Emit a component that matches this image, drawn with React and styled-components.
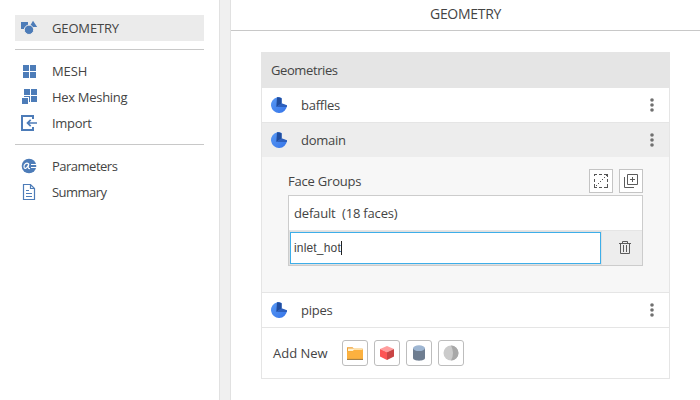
import React from "react";
import styled, { createGlobalStyle } from "styled-components";

const GlobalStyle = createGlobalStyle`
  *, *::before, *::after { box-sizing: border-box; }
  body { margin: 0; background: #fff; overflow: hidden; }
  svg { display: block; flex: none; }
`;

const Page = styled.div`
  display: flex;
  width: 700px;
  height: 400px;
  overflow: hidden;
  font-family: "Open Sans", "Noto Sans", sans-serif;
  font-size: 13px;
  line-height: 20px;
  color: #444;
  background: #fff;
`;

const Sidebar = styled.nav`
  flex: none;
  width: 219px;
  padding: 15px 15px 0;
`;

const NavItem = styled.div`
  display: flex;
  align-items: center;
  height: 26px;
  padding-left: 5px;
  gap: 14px;
  background: ${(p) => (p.$active ? "#ebebeb" : "transparent")};
`;

const NavIcon = styled.span`
  width: 18px;
  height: 18px;
`;

const NavLabel = styled.span`
  letter-spacing: ${(p) => p.$tracking || 0}px;
`;

const NavDivider = styled.div`
  height: 1px;
  margin: 8px 0;
  background: #c8c8c8;
`;

const Splitter = styled.div`
  flex: none;
  width: 12px;
  background: #f0f0f0;
  border: solid #e1e1e1;
  border-width: 0 1px;
`;

const Main = styled.main`
  flex: 1;
`;

const Title = styled.header`
  height: 31px;
  padding-top: 4px;
  font-size: 14px;
  letter-spacing: -0.3px;
  text-align: center;
  border-bottom: 1px solid #c8c8c8;
`;

const Panel = styled.section`
  width: 409px;
  margin: 21px 0 0 30px;
  border: 1px solid #e5e5e5;
  border-top: 0;
`;

const PanelHeader = styled.div`
  height: 36px;
  padding: 8px 0 0 9px;
  letter-spacing: -0.4px;
  background: #e5e5e5;
`;

const GeometryRow = styled.div`
  display: flex;
  align-items: center;
  height: ${(p) => (p.$open ? 34 : 35)}px;
  padding: 0 13px 0 9px;
  background: ${(p) => (p.$open ? "#ededed" : "#fff")};
  border-bottom: ${(p) => (p.$open ? "0" : "1px solid #e5e5e5")};
`;

const GeometryName = styled.span`
  flex: 1;
  margin-left: 14px;
  letter-spacing: -0.25px;
`;

const Details = styled.div`
  height: 136px;
  padding: 12px 26px 0;
  background: #f7f7f7;
  border-bottom: 1px solid #e5e5e5;
`;

const DetailsHeader = styled.div`
  display: flex;
  align-items: center;
  height: 24px;
  gap: 6px;
`;

const DetailsTitle = styled.span`
  flex: 1;
  letter-spacing: -0.2px;
`;

const ToolButton = styled.button`
  display: grid;
  place-items: center;
  width: 24px;
  height: 24px;
  padding: 0;
  background: #fff;
  border: 1px solid #c4c4c4;
`;

const FaceList = styled.div`
  width: 355px;
  margin-top: 2px;
  border: 1px solid #ccc;
`;

const FaceRow = styled.div`
  height: 35px;
  padding: 7px 0 0 5px;
  letter-spacing: -0.17px;
  background: #fff;
  border-bottom: 1px solid #e5e5e5;
  white-space: pre;
`;

const EditRow = styled.div`
  display: flex;
  height: 34px;
  background: #ededed;
`;

const NameField = styled.div`
  display: flex;
  align-items: center;
  width: 313px;
  height: 34px;
  padding-left: 4px;
  font-family: "Liberation Sans", Arial, sans-serif;
  font-size: 12px;
  letter-spacing: 0.17px;
  background: #fff;
  border: 1px solid #e0e0e0;
  box-shadow: inset 0 0 0 1px #3daee9;
`;

const Caret = styled.span`
  width: 1px;
  height: 14px;
  background: #222;
`;

const DeleteCell = styled.div`
  flex: 1;
  display: grid;
  place-items: center;
  padding-left: 6px;
`;

const AddRow = styled.div`
  display: flex;
  align-items: center;
  height: 50px;
  padding-left: 11px;
  gap: 6px;
`;

const AddLabel = styled.span`
  width: 63px;
`;

const AddButton = styled.button`
  display: grid;
  place-items: center;
  width: 26px;
  height: 26px;
  padding: 0;
  background: #fff;
  border: 1px solid #bdbdbd;
  border-radius: 3px;
`;

const BLUE = "#4d7cb8";

const ShapesIcon = () => (
  <svg width="18" height="18">
    <path d="M1 3h7v7H1zM13 1.7 17.2 8H9.4z" fill={BLUE} />
    <circle cx="9" cy="10.8" r="4.7" fill={BLUE} stroke="#ebebeb" strokeWidth="1" />
  </svg>
);

const MeshIcon = () => (
  <svg width="18" height="18" fill={BLUE}>
    <path d="M3 3h6v6H3zM10 3h6v6h-6zM3 10h6v6H3zM10 10h6v6h-6z" />
  </svg>
);

const HexIcon = () => (
  <svg width="18" height="18" fill={BLUE}>
    <path d="M4 1h6v6H4zM11 1h6v6h-6zM11 8h6v6h-6zM4 8h6v6H9V9H4zM2 10h6v6H2z" />
  </svg>
);

const ImportIcon = () => (
  <svg width="18" height="18" fill="none" stroke={BLUE} strokeWidth="2">
    <path d="M13 5V2H2v14h11v-3" />
    <path d="M17 9H8M10.7 5.8 7.5 9l3.2 3.2" strokeWidth="1.7" />
  </svg>
);

const ParametersIcon = () => (
  <svg width="18" height="18">
    <circle cx="9" cy="9" r="7.3" fill={BLUE} />
    <path d="M8.7 7C6.5 4.9 3.6 7.5 4 10c.4 2.3 3.2 1.9 5-3.5-.7 2-1.7 5.9 1 5" fill="none" stroke="#fff" strokeWidth="1.1" />
    <path d="M11 7.5h5.5M11 10.5h5.5" stroke="#fff" strokeWidth="1" />
  </svg>
);

const SummaryIcon = () => (
  <svg width="18" height="18" fill="none" stroke={BLUE}>
    <path d="M3.5 1.5h7l4 4v11h-11zM10.5 1.5v4h4" strokeWidth="1.2" />
    <path d="M6 7.5h3M6 10.5h6M6 13.5h6" />
  </svg>
);

const GeometryIcon = () => (
  <svg width="16" height="16">
    <defs>
      <linearGradient id="geo" x1="0" y1="0" x2="1" y2="1">
        <stop offset="0" stopColor="#5a9af5" />
        <stop offset="1" stopColor="#3574e8" />
      </linearGradient>
    </defs>
    <path d="M6.2.2A8 8 0 1 0 16 8.5L10.6 7V1Q8-.2 6.2.2z" fill="url(#geo)" />
    <path d="M5.3 10 6 .3Q8-.1 10.6 1.2V6.5z" fill="#214d9d" />
    <path d="M5.3 10 10.6 6.3 16 8.3q0 .9-.2 1.7z" fill="#2c5fbd" />
  </svg>
);

const MoreIcon = () => (
  <svg width="8" height="16" fill="#707070">
    <circle cx="4" cy="3" r="1.8" />
    <circle cx="4" cy="8" r="1.8" />
    <circle cx="4" cy="13" r="1.8" />
  </svg>
);

const SelectIcon = () => (
  <svg width="14" height="14" fill="none" stroke="#555">
    <path d="M0 .5h3M5 .5h3M10 .5h4M0 13.5h3M5 13.5h3M10 13.5h4M.5 0v2M.5 5v3M.5 10v4M13.5 0v3M13.5 5v3M13.5 10v4" />
    <path d="M12 1.5h2" />
    <path d="M2 11.5h1M4 9.5h1M6 7.5h1M8 5.5h1M10 3.5h1" />
  </svg>
);

const DuplicateIcon = () => (
  <svg width="14" height="14" fill="none" stroke="#5b5b5b">
    <path d="M3.5.5h10v10h-10zM.5 3v10.5H10M8.5 3v5M6 5.5h5" />
  </svg>
);

const TrashIcon = () => (
  <svg width="12" height="14" fill="none" stroke="#5b5b5b">
    <path d="M0 2.5h12M3.5 2.5v-2h5v2M1.5 3v9.5h9V3M4.5 4v7M7.5 4v7" />
  </svg>
);

const FolderIcon = () => (
  <svg width="16" height="14">
    <path d="M0 1.2h5.5L7 2.5h8.5V13H0z" fill="#efa033" />
    <path d="M1 2.5h14V5H1z" fill="#fff0cd" />
    <path d="M0 5.2h5.5L7 3.8h9V13H0z" fill="#fcb13f" />
    <path d="M0 13.4h16" stroke="#9b7132" />
  </svg>
);

const CubeIcon = () => (
  <svg width="14" height="14">
    <path d="M0 3 7 0l7 3-7 3.2z" fill="#ff9d9d" />
    <path d="M0 3 7 6.2V14L0 10.6z" fill="#fd5454" />
    <path d="M14 3 7 6.2V14l7-3.4z" fill="#c94444" />
  </svg>
);

const CylinderIcon = () => (
  <svg width="12" height="16">
    <path d="M0 3v10c0 3.5 12 3.5 12 0V3z" fill="#6e7d90" />
    <ellipse cx="6" cy="3.2" rx="6" ry="2.9" fill="#9eb6d2" />
  </svg>
);

const SphereIcon = () => (
  <svg width="16" height="16">
    <circle cx="8" cy="8" r="7.5" fill="#cbcbcb" />
    <path d="M8 .5A7.5 7.5 0 0 1 8 15.5Q12 8 8 .5z" fill="#a8a8a8" />
  </svg>
);

const Nav = ({ icon: Icon, label, active, tracking }) => (
  <NavItem $active={active}>
    <NavIcon><Icon /></NavIcon>
    <NavLabel $tracking={tracking}>{label}</NavLabel>
  </NavItem>
);

const Geometry = ({ name, open }) => (
  <GeometryRow $open={open}>
    <GeometryIcon />
    <GeometryName>{name}</GeometryName>
    <MoreIcon />
  </GeometryRow>
);

export default function App() {
  return (
    <Page>
      <GlobalStyle />
      <Sidebar>
        <Nav icon={ShapesIcon} label="GEOMETRY" tracking={-0.15} active />
        <NavDivider />
        <Nav icon={MeshIcon} label="MESH" tracking={-0.1} />
        <Nav icon={HexIcon} label="Hex Meshing" tracking={-0.3} />
        <Nav icon={ImportIcon} label="Import" tracking={-0.3} />
        <NavDivider />
        <Nav icon={ParametersIcon} label="Parameters" tracking={-0.5} />
        <Nav icon={SummaryIcon} label="Summary" tracking={-0.55} />
      </Sidebar>
      <Splitter />
      <Main>
        <Title>GEOMETRY</Title>
        <Panel>
          <PanelHeader>Geometries</PanelHeader>
          <Geometry name="baffles" />
          <Geometry name="domain" open />
          <Details>
            <DetailsHeader>
              <DetailsTitle>Face Groups</DetailsTitle>
              <ToolButton aria-label="Select faces"><SelectIcon /></ToolButton>
              <ToolButton aria-label="Add group"><DuplicateIcon /></ToolButton>
            </DetailsHeader>
            <FaceList>
              <FaceRow>{"default  (18 faces)"}</FaceRow>
              <EditRow>
                <NameField>inlet_hot<Caret /></NameField>
                <DeleteCell><TrashIcon /></DeleteCell>
              </EditRow>
            </FaceList>
          </Details>
          <Geometry name="pipes" />
          <AddRow>
            <AddLabel>Add New</AddLabel>
            <AddButton aria-label="Import file"><FolderIcon /></AddButton>
            <AddButton aria-label="Box"><CubeIcon /></AddButton>
            <AddButton aria-label="Cylinder"><CylinderIcon /></AddButton>
            <AddButton aria-label="Sphere"><SphereIcon /></AddButton>
          </AddRow>
        </Panel>
      </Main>
    </Page>
  );
}
